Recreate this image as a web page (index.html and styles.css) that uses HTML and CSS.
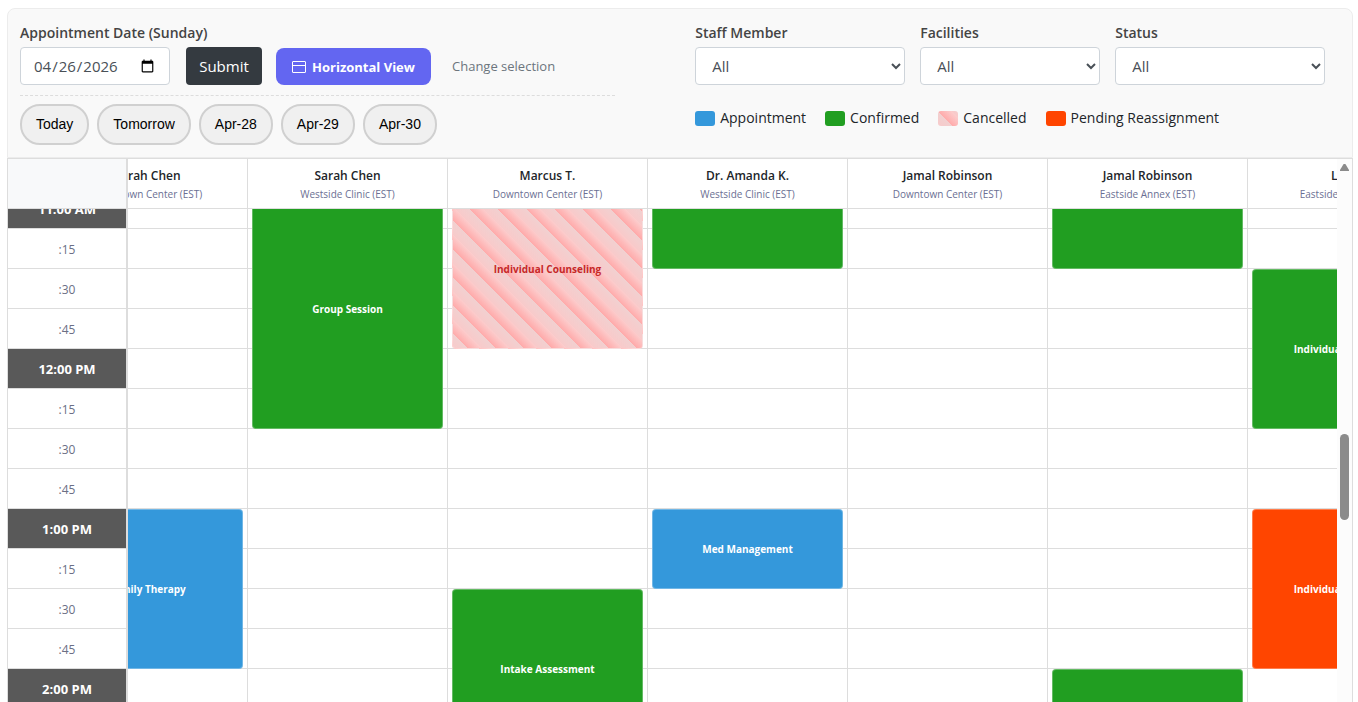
FILE: index.html
```html
<!DOCTYPE html>
<html lang="en">
<head>
    <meta charset="UTF-8">
    <meta name="viewport" content="width=device-width, initial-scale=1">
    <title>Appointments</title>
    <link rel="stylesheet" href="styles.css">
</head>
<body>
    <form class="toolbar" id="toolbar">
        <div class="date-panel">
            <label for="appt-date">Appointment Date (Sunday)</label>
            <div class="date-row">
                <input type="date" class="form-control" id="appt-date" value="2026-04-26">
                <button type="submit" class="btn-submit">Submit</button>
                <button type="button" class="btn-view">
                    <svg width="14" height="12" viewBox="0 0 14 12" fill="none" stroke="currentColor" aria-hidden="true">
                        <rect x="0.5" y="0.5" width="13" height="11" rx="0.5"/>
                        <path d="M0.5 4.5h13"/>
                    </svg>
                    Horizontal View
                </button>
                <a href="#" class="change-link">Change selection</a>
            </div>
            <div class="quick-days">
                <button type="button">Today</button>
                <button type="button">Tomorrow</button>
                <button type="button">Apr-28</button>
                <button type="button">Apr-29</button>
                <button type="button">Apr-30</button>
            </div>
        </div>

        <div class="filter-panel">
            <div class="filters">
                <div class="filter">
                    <label for="staff">Staff Member</label>
                    <select class="form-control" id="staff"><option>All</option></select>
                </div>
                <div class="filter filter-narrow">
                    <label for="facility">Facilities</label>
                    <select class="form-control" id="facility"><option>All</option></select>
                </div>
                <div class="filter">
                    <label for="status">Status</label>
                    <select class="form-control" id="status"><option>All</option></select>
                </div>
            </div>
            <ul class="legend">
                <li><span class="swatch booked"></span>Appointment</li>
                <li><span class="swatch confirmed"></span>Confirmed</li>
                <li><span class="swatch cancelled"></span>Cancelled</li>
                <li><span class="swatch pending"></span>Pending Reassignment</li>
            </ul>
        </div>
    </form>

    <div class="calendar">
        <div class="calendar-scroll" id="calendar-scroll">
            <table class="schedule">
                <thead><tr id="schedule-head"><th class="corner"></th></tr></thead>
                <tbody id="schedule-body"></tbody>
            </table>
        </div>
        <div class="scrollbar">
            <div class="scroll-arrow"></div>
            <div class="scroll-thumb"></div>
        </div>
    </div>

    <script src="schedule.js"></script>
</body>
</html>
```
FILE: styles.css
```css
* {
    box-sizing: border-box;
}

body {
    display: flex;
    flex-direction: column;
    height: 100vh;
    margin: 0;
    padding: 8px 5px 0 7px;
    overflow: hidden;
    background-color: #fff;
    color: #212529;
    font-family: "Open Sans", sans-serif;
    font-size: 15px;
    line-height: 24px;
}

button,
input,
select {
    font-family: inherit;
}

.toolbar {
    display: grid;
    grid-template-columns: 12fr 13fr;
    column-gap: 80px;
    padding: 12px;
    background-color: #f9f9f9;
    border: 1px solid #ececec;
    border-radius: 8px 8px 0 0;
}

.toolbar label {
    display: block;
    margin-bottom: 2px;
    color: #444;
    font-size: 14px;
    font-weight: 600;
}

.form-control {
    display: block;
    height: 38px;
    padding: 6px 12px;
    border: 1px solid #ced4da;
    border-radius: 4px;
    background-color: #fff;
    color: #495057;
    font-size: 15px;
}

.date-row {
    display: flex;
    align-items: flex-end;
    padding-bottom: 10px;
    border-bottom: 1px dashed #ddd;
}

.date-row .form-control {
    width: 150px;
    margin-right: 16px;
}

.btn-submit {
    width: 76px;
    height: 38px;
    margin-right: 14px;
    padding: 0;
    border: 0;
    border-radius: 4px;
    background-color: #343a40;
    color: #fff;
    font-size: 15px;
}

.btn-view {
    display: flex;
    align-items: center;
    justify-content: center;
    gap: 6px;
    width: 155px;
    height: 37px;
    margin-right: 21px;
    padding: 0;
    border: 0;
    border-radius: 8px;
    background-color: #6366f1;
    color: #fff;
    font-size: 13px;
    font-weight: 700;
}

.change-link {
    align-self: center;
    color: #6c757d;
    font-size: 13px;
    text-decoration: none;
}

.quick-days {
    display: flex;
    gap: 8px;
    padding-top: 8px;
}

.quick-days button {
    height: 41px;
    padding: 0 14px 2px;
    border: 2px solid #d0d0d0;
    border-radius: 20px;
    background-color: #f0f0f0;
    color: #000;
    font-family: "Liberation Sans", Arial, sans-serif;
    font-size: 14px;
}

.filters {
    display: flex;
    gap: 15px;
    margin-bottom: 21px;
}

.filter {
    width: 210px;
}

.filter-narrow {
    width: 180px;
}

.filter .form-control {
    width: 100%;
}

.legend {
    display: flex;
    gap: 19px;
    margin: 0;
    padding: 0;
    list-style: none;
    font-size: 14px;
}

.legend li {
    display: flex;
    align-items: center;
    gap: 5px;
}

.swatch {
    width: 20px;
    height: 15px;
    border-radius: 3px;
}

.calendar {
    display: flex;
    flex: 1;
    min-height: 0;
    border: 1px solid #ddd;
    border-bottom: 0;
}

.calendar-scroll {
    flex: 1;
    min-width: 0;
    overflow: hidden;
}

.schedule {
    width: 1720px;
    table-layout: fixed;
    border-collapse: separate;
    border-spacing: 0;
}

.schedule th,
.schedule td {
    padding: 0;
    border-right: 1px solid #ddd;
    border-bottom: 1px solid #ddd;
    text-align: center;
}

.schedule thead th {
    position: sticky;
    top: 0;
    z-index: 3;
    height: 50px;
    padding-top: 2px;
    background-color: #fff;
    font-size: 12px;
    font-weight: 600;
    line-height: 19px;
}

.schedule thead small {
    display: block;
    color: #6b6f93;
    font-size: 10px;
    font-weight: 400;
}

.schedule thead .corner {
    left: 0;
    z-index: 4;
    width: 120px;
    border-right-width: 2px;
    background-color: #f8f9fa;
}

.schedule tbody th {
    position: sticky;
    left: 0;
    z-index: 2;
    height: 40px;
    padding-top: 2px;
    border-right-width: 2px;
    background-color: #fff;
    color: #6b6f85;
    font-size: 12px;
    font-weight: 400;
}

.schedule tbody .hour {
    padding-top: 0;
    background-color: #595959;
    color: #fff;
    font-size: 13px;
    font-weight: 700;
}

.schedule td {
    position: relative;
}

/* appointments cover the grid lines of the slots they span */
.appointment {
    position: absolute;
    top: 0;
    left: 4px;
    right: 4px;
    z-index: 1;
    display: flex;
    align-items: center;
    justify-content: center;
    border: 1px solid rgba(255, 255, 255, 0.3);
    border-radius: 4px;
    color: #fff;
    font-size: 10px;
    font-weight: 700;
}

.booked {
    background-color: #3498db;
}

.confirmed {
    background-color: #219e21;
}

.pending {
    background-color: #ff4500;
}

.cancelled {
    background: repeating-linear-gradient(45deg, #f8caca, #f1d0d0 10px, #ffaaaa 10px, #fccccc 20px);
    color: #c62828;
}

.scrollbar {
    width: 15px;
    padding: 5px 3px 0;
    background-color: #fcfcfc;
}

.scroll-arrow {
    width: 9px;
    height: 7px;
    background-color: #8b8b8b;
    clip-path: polygon(40% 0, 60% 0, 100% 85%, 100% 100%, 0 100%, 0 85%);
}

.scroll-thumb {
    width: 9px;
    height: 86px;
    margin-top: 263px;
    border-radius: 5px;
    background-color: #8b8b8b;
}
```
FILE: schedule.js
```js
const SLOT_HEIGHT = 40;
const FIRST_SLOT = 42; // 10:30 AM, counted in quarter hours
const LAST_SLOT = 64;

const columns = [
  { name: 'Sarah Chen', place: 'Downtown Center (EST)' },
  { name: 'Sarah Chen', place: 'Westside Clinic (EST)' },
  { name: 'Marcus T.', place: 'Downtown Center (EST)' },
  { name: 'Dr. Amanda K.', place: 'Westside Clinic (EST)' },
  { name: 'Jamal Robinson', place: 'Downtown Center (EST)' },
  { name: 'Jamal Robinson', place: 'Eastside Annex (EST)' },
  { name: 'Lisa P', place: 'Eastside Annex (EST)' },
  { name: '', place: '' },
];

const appointments = [
  { column: 0, slot: 52, slots: 4, status: 'booked', title: 'Family Therapy' },
  { column: 1, slot: 44, slots: 6, status: 'confirmed', title: 'Group Session' },
  { column: 2, slot: 44, slots: 4, status: 'cancelled', title: 'Individual Counseling' },
  { column: 2, slot: 54, slots: 4, status: 'confirmed', title: 'Intake Assessment' },
  { column: 3, slot: 42, slots: 4, status: 'confirmed', title: '' },
  { column: 3, slot: 52, slots: 2, status: 'booked', title: 'Med Management' },
  { column: 5, slot: 42, slots: 4, status: 'confirmed', title: '' },
  { column: 5, slot: 56, slots: 4, status: 'confirmed', title: '' },
  { column: 6, slot: 46, slots: 4, status: 'confirmed', title: 'Individual Counseling' },
  { column: 6, slot: 52, slots: 4, status: 'pending', title: 'Individual Counseling' },
];

const head = document.getElementById('schedule-head');
const body = document.getElementById('schedule-body');
const scroller = document.getElementById('calendar-scroll');

function slotLabel(slot) {
  const hour = Math.floor(slot / 4);
  if (slot % 4 !== 0) {
    return `:${(slot % 4) * 15}`;
  }
  return `${hour > 12 ? hour - 12 : hour}:00 ${hour < 12 ? 'AM' : 'PM'}`;
}

for (const column of columns) {
  const th = document.createElement('th');
  th.scope = 'col';
  th.innerHTML = `${column.name}<small>${column.place}</small>`;
  head.appendChild(th);
}

for (let slot = FIRST_SLOT; slot < LAST_SLOT; slot++) {
  const row = body.insertRow();
  const time = document.createElement('th');
  time.scope = 'row';
  time.textContent = slotLabel(slot);
  if (slot % 4 === 0) {
    time.className = 'hour';
  }
  row.appendChild(time);

  columns.forEach((column, index) => {
    const cell = row.insertCell();
    const found = appointments.find((item) => item.column === index && item.slot === slot);
    if (found) {
      const block = document.createElement('div');
      block.className = `appointment ${found.status}`;
      block.style.height = `${found.slots * SLOT_HEIGHT}px`;
      block.textContent = found.title;
      cell.appendChild(block);
    }
  });
}

// open the calendar just before 11:00 AM
scroller.scrollTop = 100;
scroller.scrollLeft = 80;

document.getElementById('toolbar').addEventListener('submit', (event) => {
  event.preventDefault();
});
```
